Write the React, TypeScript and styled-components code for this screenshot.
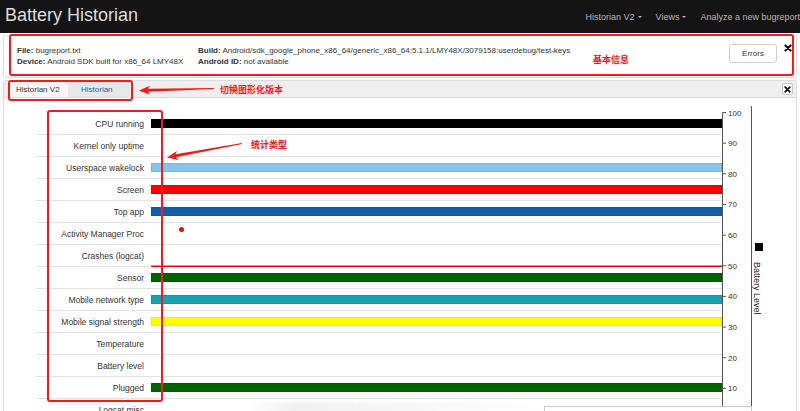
import React from "react";
import styled, { createGlobalStyle } from "styled-components";

const Global = createGlobalStyle`
  html, body { margin: 0; padding: 0; background: #fff; }
  body {
    font-family: "Liberation Sans", Arial, Helvetica, sans-serif;
    color: #333;
    width: 800px;
    height: 411px;
    overflow: hidden;
  }
  * { box-sizing: border-box; }
`;

const Page = styled.div`
  position: relative;
  width: 800px;
  height: 411px;
  overflow: hidden;
`;

/* ---------- navbar ---------- */
const Navbar = styled.header`
  height: 33px;
  background: #141414;
  display: flex;
  align-items: center;
  justify-content: space-between;
  padding-left: 5px;
`;
const Brand = styled.div`
  font-size: 18px;
  color: #dedede;
  padding-bottom: 3px;
`;
const NavMenu = styled.nav`
  display: flex;
  align-items: center;
  gap: 14px;
  font-size: 9px;
  color: #b8b8b8;
  white-space: nowrap;
`;
const NavItem = styled.span`
  display: inline-flex;
  align-items: center;
  gap: 3px;
`;
const Caret = styled.span`
  width: 0;
  height: 0;
  border-left: 2.5px solid transparent;
  border-right: 2.5px solid transparent;
  border-top: 2.5px solid currentColor;
`;

/* ---------- content ---------- */
const Content = styled.main`
  padding: 2px 3px 0;
  display: flex;
  flex-direction: column;
  gap: 2px;
`;

const InfoWell = styled.section`
  height: 43px;
  border: 1px solid #dcdcdc;
  border-radius: 3px;
  display: flex;
  align-items: flex-start;
  padding: 8px 4px 0 13px;
  font-size: 8px;
  line-height: 11px;
`;
const InfoCol = styled.div<{ $w?: number }>`
  ${(p) => (p.$w ? `width: ${p.$w}px; flex: none;` : "flex: 1;")}
  margin-top: 0.5px;
  white-space: nowrap;
`;
const InfoLine = styled.div``;
const Key = styled.b`
  font-weight: bold;
  color: #333;
`;
const ErrorsButton = styled.button`
  width: 48px;
  height: 19px;
  border: 1px solid #cfcfcf;
  border-radius: 3px;
  background: #fff;
  font-family: inherit;
  font-size: 8px;
  color: #333;
  padding: 0;
  margin-right: 7px;
`;
const CloseGlyph = styled.svg`
  width: 8px;
  height: 8px;
  flex: none;
`;

const TabsPanel = styled.section`
  border: 1px solid #dcdcdc;
  border-bottom: none;
  border-radius: 3px 3px 0 0;
  display: flex;
  flex-direction: column;
`;
const TabBar = styled.div`
  height: 17px;
  background: #efefef;
  border-bottom: 1px solid #dcdcdc;
  display: flex;
  align-items: stretch;
  padding: 0 3px 0 5px;
`;
const Tab = styled.div<{ $active?: boolean; $w: number; $pad: number }>`
  width: ${(p) => p.$w}px;
  padding-left: ${(p) => p.$pad}px;
  display: flex;
  align-items: center;
  font-size: 8px;
  background: ${(p) => (p.$active ? "#f8f8f8" : "#e7e7e7")};
  color: ${(p) => (p.$active ? "#333" : "#2a62a6")};
`;
const TabClose = styled.div`
  margin-left: auto;
  align-self: center;
  width: 11px;
  height: 12px;
  border: 1px solid #c8c8c8;
  border-radius: 2px;
  background: #fff;
  display: flex;
  align-items: center;
  justify-content: center;
`;

const ChartArea = styled.div`
  display: flex;
  height: 320px;
  background: #fff;
`;
const RowsCol = styled.div`
  position: relative;
  margin-left: 32px;
  width: 686px;
  padding-top: 15px;
`;
const Row = styled.div`
  display: grid;
  grid-template-columns: 115px 571px;
  height: 22px;
  border-bottom: 1px solid #e3e3e3;
  align-items: center;
`;
const RowLabel = styled.div`
  text-align: right;
  padding-right: 7px;
  font-size: 8.5px;
  color: #333;
  white-space: nowrap;
`;
const Track = styled.div`
  position: relative;
  height: 100%;
  display: flex;
  align-items: center;
`;
const Bar = styled.div<{ $color: string }>`
  width: 100%;
  height: 9.5px;
  background: ${(p) => p.$color};
  box-shadow: inset 0 0 0 0.5px rgba(0, 0, 0, 0.15);
`;
const Dot = styled.span`
  position: absolute;
  left: 27.5px;
  top: 4px;
  width: 5px;
  height: 5px;
  border-radius: 50%;
  background: #f00;
`;
const BatteryTrace = styled.svg`
  position: absolute;
  left: 115px;
  top: 167px;
  width: 571px;
  height: 3px;
  overflow: visible;
`;
const AxisSvg = styled.svg`
  width: 74px;
  height: 320px;
  flex: none;
  overflow: visible;
`;

const Popover = styled.div`
  position: absolute;
  left: 544px;
  top: 406px;
  width: 208px;
  height: 20px;
  border: 1px solid #c9c9c9;
  background: #fff;
`;
const Shade = styled.div`
  position: absolute;
  left: 250px;
  top: 402px;
  width: 290px;
  height: 14px;
  background: linear-gradient(to right, rgba(230,230,230,0.0), rgba(230,230,230,0.6) 15%, rgba(242,242,242,0.45) 70%, rgba(255,255,255,0));
  filter: blur(2px);
`;

/* ---------- annotations ---------- */
const NoteBox = styled.div<{ $x: number; $y: number; $w: number; $h: number }>`
  position: absolute;
  left: ${(p) => p.$x}px;
  top: ${(p) => p.$y}px;
  width: ${(p) => p.$w}px;
  height: ${(p) => p.$h}px;
  border: 2.5px solid #ee1d1d;
  border-radius: 3px;
  pointer-events: none;
`;
const NoteText = styled.div<{ $x: number; $y: number }>`
  position: absolute;
  left: ${(p) => p.$x}px;
  top: ${(p) => p.$y}px;
  font-family: "Noto Sans CJK SC", sans-serif;
  font-size: 9px;
  line-height: 11px;
  font-weight: bold;
  color: #e8201c;
  text-shadow: 0 0 1px #fff, 0 0 2px #ffd6d6, 0 0 3px #ffd6d6;
  white-space: nowrap;
`;
const ArrowLayer = styled.svg`
  position: absolute;
  left: 0;
  top: 0;
  width: 800px;
  height: 411px;
  pointer-events: none;
`;

function arrowPoints(
  tipX: number,
  tipY: number,
  tailX: number,
  tailY: number,
  headLen = 11,
  headHalf = 4.5,
  shaftHead = 1.5,
  shaftTail = 0.5
) {
  const dx = tailX - tipX;
  const dy = tailY - tipY;
  const len = Math.hypot(dx, dy);
  const ux = dx / len;
  const uy = dy / len;
  const px = -uy;
  const py = ux;
  const bx = tipX + ux * headLen;
  const by = tipY + uy * headLen;
  const notchX = tipX + ux * (headLen - 2);
  const notchY = tipY + uy * (headLen - 2);
  const pts = [
    [tipX, tipY],
    [bx + px * headHalf, by + py * headHalf],
    [notchX + px * shaftHead, notchY + py * shaftHead],
    [tailX + px * shaftTail, tailY + py * shaftTail],
    [tailX - px * shaftTail, tailY - py * shaftTail],
    [notchX - px * shaftHead, notchY - py * shaftHead],
    [bx - px * headHalf, by - py * headHalf],
  ];
  return pts.map((p) => p.map((n) => n.toFixed(2)).join(",")).join(" ");
}

type RowData = { label: string; color?: string; dot?: boolean };
const rows: RowData[] = [
  { label: "CPU running", color: "#000000" },
  { label: "Kernel only uptime" },
  { label: "Userspace wakelock", color: "#87c4ea" },
  { label: "Screen", color: "#ff0000" },
  { label: "Top app", color: "#135ea8" },
  { label: "Activity Manager Proc", dot: true },
  { label: "Crashes (logcat)" },
  { label: "Sensor", color: "#006400" },
  { label: "Mobile network type", color: "#17a3b0" },
  { label: "Mobile signal strength", color: "#ffff00" },
  { label: "Temperature" },
  { label: "Battery level" },
  { label: "Plugged", color: "#006400" },
  { label: "Logcat misc" },
];

const ticks = [100, 90, 80, 70, 60, 50, 40, 30, 20, 10];
const tickY = (v: number) => 14.5 + (100 - v) * 3.065;

const XIcon = ({ size = 8 }: { size?: number }) => (
  <CloseGlyph viewBox="0 0 8 8" style={{ width: size, height: size }}>
    <path d="M1.4 1.4 L6.6 6.6 M6.6 1.4 L1.4 6.6" stroke="#111" strokeWidth="2.1" strokeLinecap="round" />
  </CloseGlyph>
);

export default function App() {
  return (
    <Page>
      <Global />
      <Navbar>
        <Brand>Battery Historian</Brand>
        <NavMenu>
          <NavItem>
            Historian V2 <Caret />
          </NavItem>
          <NavItem>
            Views <Caret />
          </NavItem>
          <NavItem>Analyze a new bugreport</NavItem>
        </NavMenu>
      </Navbar>

      <Content>
        <InfoWell>
          <InfoCol $w={181}>
            <InfoLine>
              <Key>File:</Key> bugreport.txt
            </InfoLine>
            <InfoLine>
              <Key>Device:</Key> Android SDK built for x86_64 LMY48X
            </InfoLine>
          </InfoCol>
          <InfoCol>
            <InfoLine>
              <Key>Build:</Key> Android/sdk_google_phone_x86_64/generic_x86_64:5.1.1/LMY48X/3079158:userdebug/test-keys
            </InfoLine>
            <InfoLine>
              <Key>Android ID:</Key> not available
            </InfoLine>
          </InfoCol>
          <ErrorsButton>Errors</ErrorsButton>
          <XIcon />
        </InfoWell>

        <TabsPanel>
          <TabBar>
            <Tab $active $w={59} $pad={7}>
              Historian V2
            </Tab>
            <Tab $w={62} $pad={13}>
              Historian
            </Tab>
            <TabClose>
              <XIcon size={7} />
            </TabClose>
          </TabBar>
          <ChartArea>
            <RowsCol>
              {rows.map((r) => (
                <Row key={r.label}>
                  <RowLabel>{r.label}</RowLabel>
                  <Track>
                    {r.color && <Bar $color={r.color} />}
                    {r.dot && <Dot />}
                  </Track>
                </Row>
              ))}
              <BatteryTrace viewBox="0 0 571 3" preserveAspectRatio="none">
                <line x1="0" y1="1.2" x2="571" y2="1.2" stroke="#ff0000" strokeWidth="1.6" />
              </BatteryTrace>
            </RowsCol>
            <AxisSvg viewBox="0 0 74 320">
              <line x1="0.5" y1={tickY(100)} x2="0.5" y2="320" stroke="#555" strokeWidth="1" />
              {ticks.map((v) => (
                <g key={v}>
                  <line x1="0.5" y1={tickY(v)} x2="4" y2={tickY(v)} stroke="#555" strokeWidth="1" />
                  <text
                    x="6"
                    y={tickY(v) + 3}
                    fontSize="8"
                    fill="#333"
                    fontFamily="Liberation Sans, Arial, sans-serif"
                  >
                    {v}
                  </text>
                </g>
              ))}
              <line x1="29.5" y1="8" x2="29.5" y2="320" stroke="#555" strokeWidth="1" />
              <rect x="33" y="145" width="8" height="8" fill="#000" />
              <text
                transform="translate(31.5 164) rotate(90)"
                fontSize="9"
                fill="#222"
                fontFamily="Liberation Sans, Arial, sans-serif"
              >
                Battery Level
              </text>
            </AxisSvg>
          </ChartArea>
        </TabsPanel>
      </Content>

      <Shade />
      <Popover />

      {/* annotations */}
      <NoteBox $x={9} $y={34} $w={785} $h={42} />
      <NoteBox $x={8} $y={80} $w={125} $h={21} />
      <NoteBox $x={47} $y={110} $w={116} $h={292} />
      <NoteText $x={593} $y={54}>基本信息</NoteText>
      <NoteText $x={220} $y={84}>切换图形化版本</NoteText>
      <NoteText $x={251} $y={139}>统计类型</NoteText>
      <ArrowLayer viewBox="0 0 800 411">
        <polygon points={arrowPoints(139, 90.5, 214, 88.5)} fill="#ee1d1d" />
        <polygon points={arrowPoints(167, 157.5, 242, 143.5)} fill="#ee1d1d" />
      </ArrowLayer>
    </Page>
  );
}
